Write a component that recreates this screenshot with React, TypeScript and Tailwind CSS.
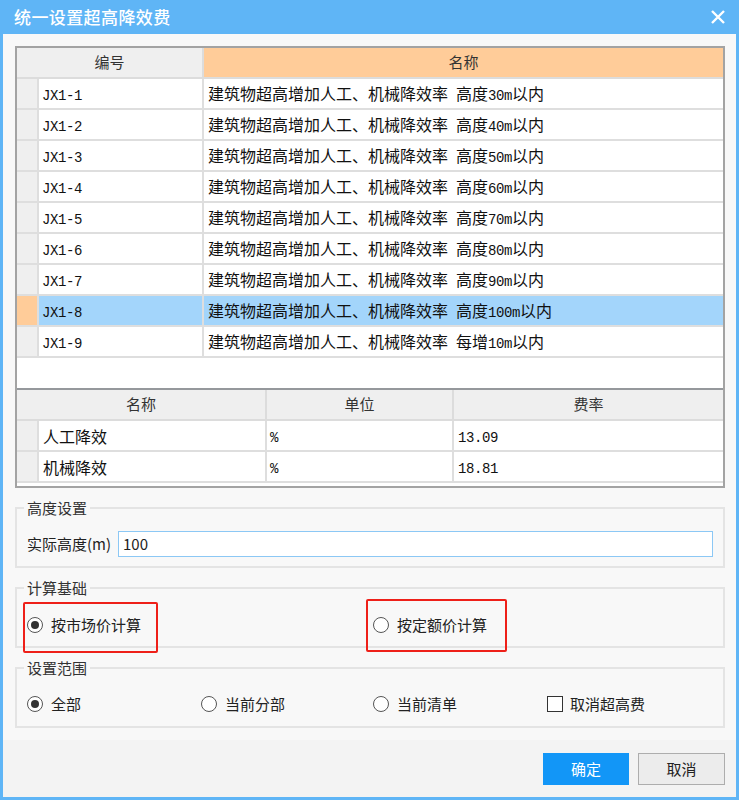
const cjk = "font-['Noto_Sans_CJK_SC',sans-serif]";

const items = [
  ["JX1-1", "建筑物超高增加人工、机械降效率 高度30m以内"],
  ["JX1-2", "建筑物超高增加人工、机械降效率 高度40m以内"],
  ["JX1-3", "建筑物超高增加人工、机械降效率 高度50m以内"],
  ["JX1-4", "建筑物超高增加人工、机械降效率 高度60m以内"],
  ["JX1-5", "建筑物超高增加人工、机械降效率 高度70m以内"],
  ["JX1-6", "建筑物超高增加人工、机械降效率 高度80m以内"],
  ["JX1-7", "建筑物超高增加人工、机械降效率 高度90m以内"],
  ["JX1-8", "建筑物超高增加人工、机械降效率 高度100m以内"],
  ["JX1-9", "建筑物超高增加人工、机械降效率 每增10m以内"],
];

const fees = [
  ["人工降效", "%", "13.09"],
  ["机械降效", "%", "18.81"],
];

// ascii runs get a half-width mono face, like the grid's SimSun
function Txt({ s }: { s: string }) {
  return (
    <span className="whitespace-pre">
      {s.split(/([\x20-\x7e]+)/).map((p, i) =>
        /^[\x20-\x7e]+$/.test(p) ? (
          <span key={i} className="font-['Liberation_Mono',monospace] text-[14px] tracking-[-0.4px]">
            {p}
          </span>
        ) : (
          <span key={i}>{p}</span>
        )
      )}
    </span>
  );
}

function Radio({ on, label }: { on?: boolean; label: string }) {
  return (
    <div className="flex items-center gap-[8px]">
      <span className="flex h-[16px] w-[16px] items-center justify-center rounded-full border-[1.5px] border-[#555] bg-white">
        {on && <span className="h-[8px] w-[8px] rounded-full bg-[#333]" />}
      </span>
      <span>{label}</span>
    </div>
  );
}

function Group({ title, children, className = "" }: { title: string; children: React.ReactNode; className?: string }) {
  return (
    <fieldset className={`relative mt-[10px] border-2 border-[#e4e4e4] px-[10px] ${className}`}>
      <legend className="-ml-[3px] px-[3px] text-[15px] leading-[20px] text-[#333]">{title}</legend>
      {children}
    </fieldset>
  );
}

export default function App() {
  return (
    <div className={`flex h-[800px] w-[739px] flex-col bg-[#5fb5f6] ${cjk}`}>
      <div className="flex h-[34px] items-center justify-between pl-[14px] pr-[14px]">
        <span className="text-[17px] font-medium tracking-[0.4px] text-white">统一设置超高降效费</span>
        <svg width="14" height="14" viewBox="0 0 14 14">
          <path d="M1 1L13 13M13 1L1 13" stroke="white" strokeWidth="2.4" />
        </svg>
      </div>

      <div className="mx-[3px] mb-[3px] flex flex-1 flex-col bg-[#f8f8f8]">
        <div className="pl-[12px] pr-[11px] pt-[12px] text-[15px] text-[#222]">
          {/* grids */}
          <div className="flex h-[442px] flex-col border-2 border-[#a3a3a3] bg-white">
            <div className="flex h-[31px] shrink-0 border-b-2 border-[#dcdcdc] text-[#333]">
              <div className="flex w-[187px] items-center justify-center border-r-2 border-[#dcdcdc] bg-[#efefef]">编号</div>
              <div className="flex flex-1 items-center justify-center bg-[#ffcc99]">名称</div>
            </div>
            {items.map(([code, name]) => {
              const sel = code === "JX1-8";
              return (
                <div key={code} className={`flex h-[31px] shrink-0 border-b-2 border-[#dedede] text-[16px] text-[#111] ${sel ? "bg-[#a3d5fb]" : ""}`}>
                  <div className={`w-[22px] border-r-2 border-[#dedede] ${sel ? "bg-[#ffcc99]" : "bg-[#efefef]"}`} />
                  <div className="flex w-[165px] items-center border-r-2 border-[#dedede] pl-[3px]">
                    <Txt s={code} />
                  </div>
                  <div className="flex flex-1 items-center pl-[4px]">
                    <Txt s={name} />
                  </div>
                </div>
              );
            })}
            <div className="h-[30px] shrink-0" />

            <div className="flex h-[33px] shrink-0 border-t-2 border-b-2 border-t-[#95989c] border-b-[#dcdcdc] bg-[#efefef] text-[#333]">
              <div className="flex w-[250px] items-center justify-center border-r-2 border-[#dcdcdc]">名称</div>
              <div className="flex w-[187px] items-center justify-center border-r-2 border-[#dcdcdc]">单位</div>
              <div className="flex flex-1 items-center justify-center">费率</div>
            </div>
            {fees.map(([n, u, r]) => (
              <div key={n} className="flex h-[31px] shrink-0 border-b-2 border-[#dedede] text-[16px] text-[#111]">
                <div className="w-[22px] border-r-2 border-[#dedede] bg-[#efefef]" />
                <div className="flex w-[228px] items-center border-r-2 border-[#dedede] pl-[4px]">
                  <Txt s={n} />
                </div>
                <div className="flex w-[187px] items-center border-r-2 border-[#dedede] pl-[3px]">
                  <Txt s={u} />
                </div>
                <div className="flex flex-1 items-center pl-[4px]">
                  <Txt s={r} />
                </div>
              </div>
            ))}
            <div className="flex-1" />
          </div>

          <Group title="高度设置">
            <div className="mb-[9px] mt-[13px] flex h-[26px] items-center">
              <span className="w-[91px]">实际高度(m)</span>
              <div className="flex h-[26px] flex-1 items-center border border-[#8cc8f5] bg-white pl-[4px]">100</div>
            </div>
          </Group>

          <Group title="计算基础">
            <div className="mb-[11px] mt-[17px] flex h-[20px] items-center">
              <div className="w-[346px]">
                <Radio on label="按市场价计算" />
              </div>
              <Radio label="按定额价计算" />
            </div>
            <div className="absolute left-[6px] top-[4px] h-[51px] w-[135px] rounded-[2px] border-2 border-[#ee2019]" />
            <div className="absolute left-[349px] top-[1px] h-[53px] w-[141px] rounded-[2px] border-2 border-[#ee2019]" />
          </Group>

          <Group title="设置范围">
            <div className="mb-[12px] mt-[16px] flex h-[20px] items-center">
              <div className="w-[174px]">
                <Radio on label="全部" />
              </div>
              <div className="w-[172px]">
                <Radio label="当前分部" />
              </div>
              <div className="w-[174px]">
                <Radio label="当前清单" />
              </div>
              <div className="flex items-center gap-[7px]">
                <span className="h-[16px] w-[16px] border-[1.5px] border-[#333] bg-white" />
                <span>取消超高费</span>
              </div>
            </div>
          </Group>
        </div>

        <div className="mt-[12px] flex flex-1 items-start justify-end gap-[9px] bg-[#f3f3f3] pr-[11px] pt-[13px] text-[15px]">
          <button className="h-[32px] w-[86px] bg-[#1296f7] text-white">确定</button>
          <button className="h-[32px] w-[87px] border border-[#adadad] bg-[#ececec] text-[#222]">取消</button>
        </div>
      </div>
    </div>
  );
}
